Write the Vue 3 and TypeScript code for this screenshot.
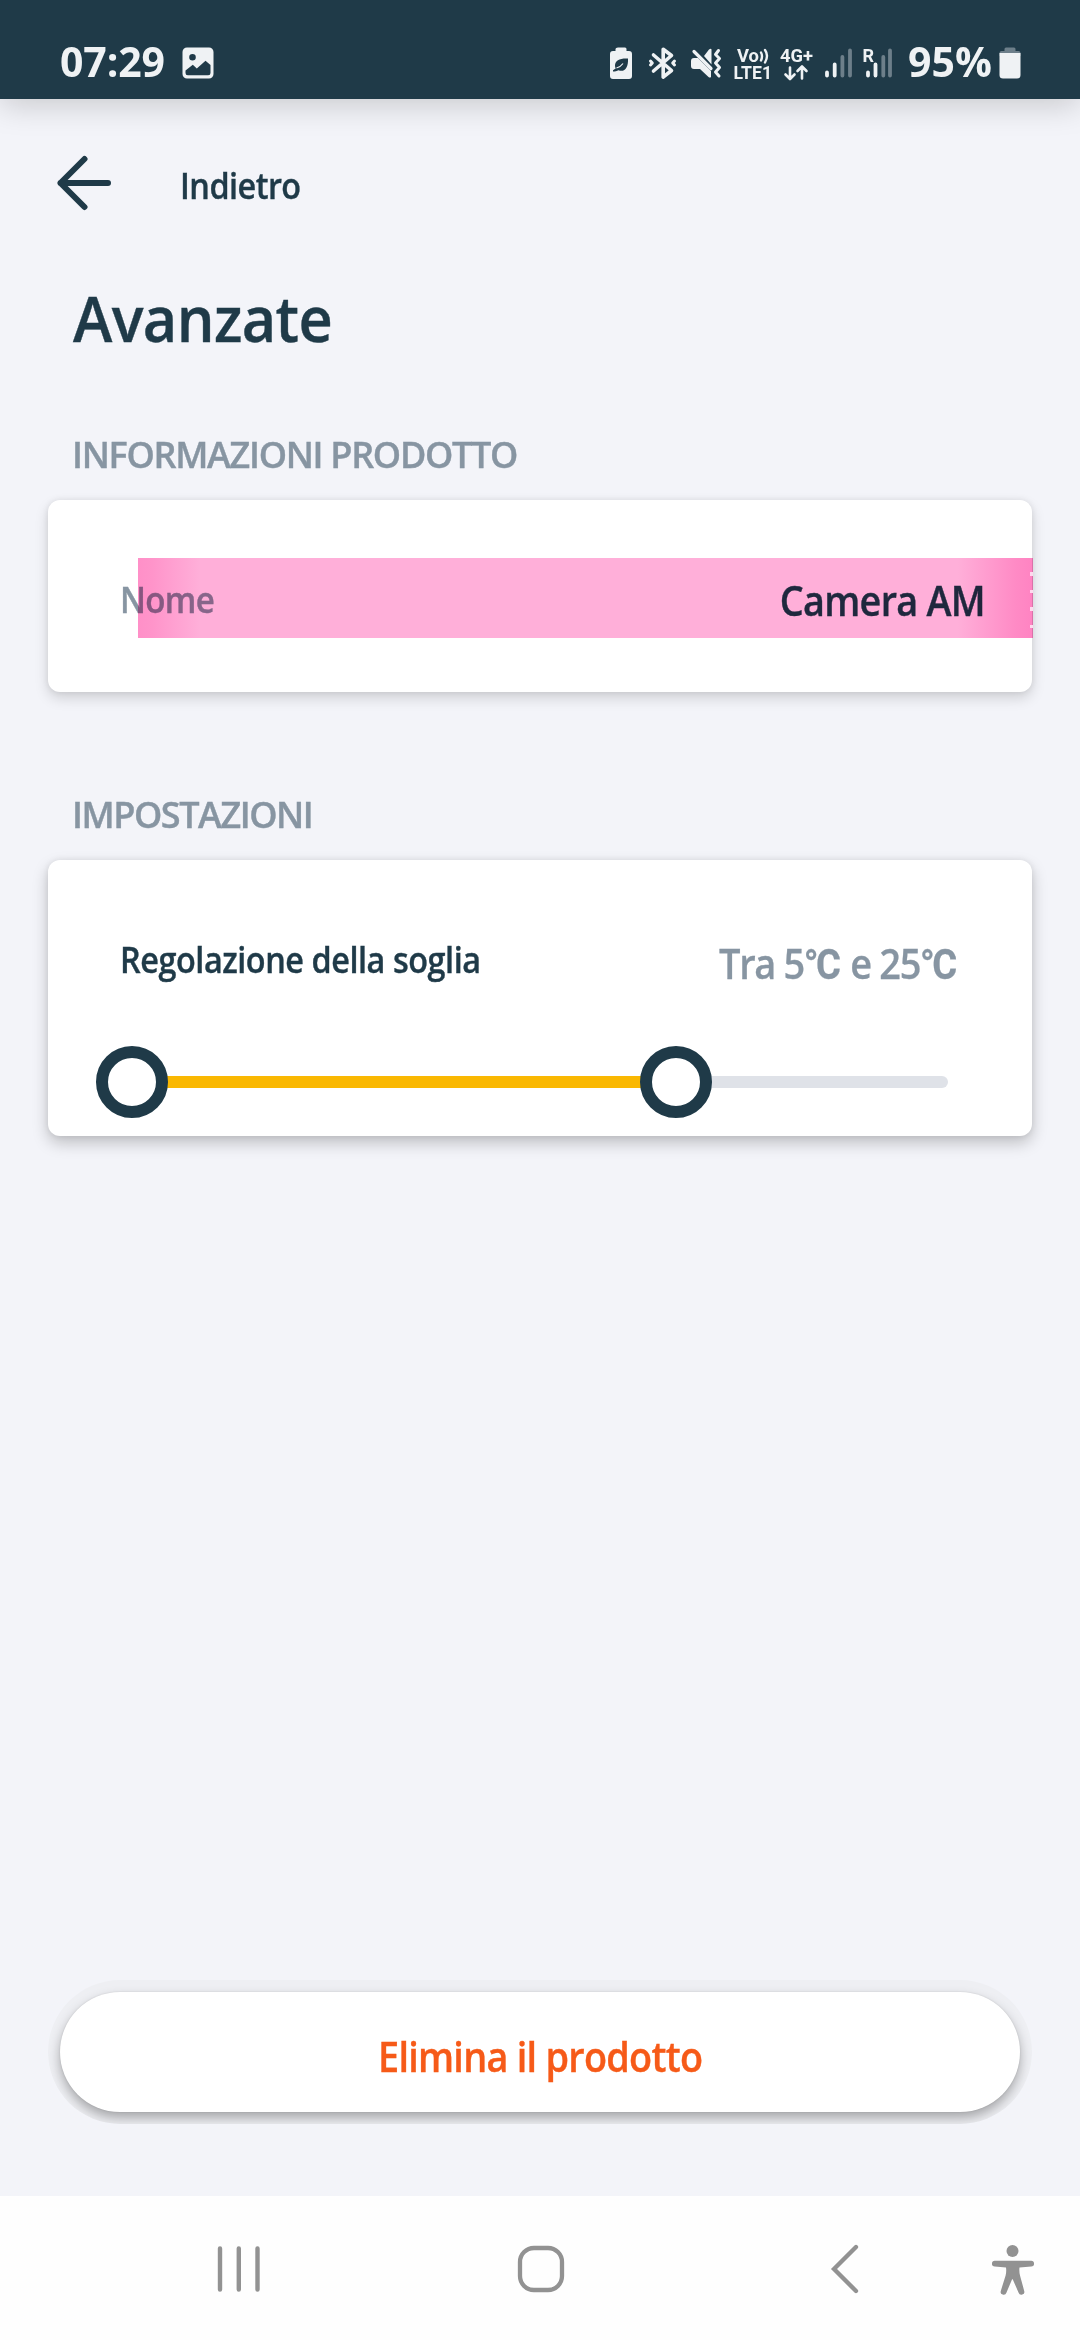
<script setup lang="ts">
import { ref } from 'vue'

const name = ref('Camera AM')
const low = ref(5)
const high = ref(25)
const trackWidth = 816
const lowPos = 0
const highPos = 544
</script>

<template>
  <div class="screen">
    <div class="status">
      <span class="clock">07:29</span>
      <svg class="photo" width="32" height="32" viewBox="0 0 32 32">
        <path fill="#eff2f4" fill-rule="evenodd" d="M5 0.5h22a4.500 4.500 0 0 1 4.500 4.500v22a4.500 4.500 0 0 1-4.500 4.500h-22a4.500 4.500 0 0 1-4.500-4.500v-22a4.500 4.500 0 0 1 4.500-4.500zM10.500 7a3.300 3.300 0 1 0 0 6.600a3.300 3.300 0 0 0 0-6.600zM3.500 23.500v2.500q0 2.300 2.300 2.300h20.400q2.300 0 2.300-2.300v-8l-5-4.300l-8.700 7.800l-4-3.700z" />
      </svg>
      <svg class="system" width="284" height="44" viewBox="608 40.500 284 44">
        <g fill="#eff2f4">
          <path fill-rule="evenodd" d="M618 47h7q1.500 0 1.500 1.500v2h2.500q3 0 3 3v22q0 3-3 3h-16q-3 0-3-3v-22q0-3 3-3h2.500v-2q0-1.500 2.500-1.500zM628 58c-8-.5-13 2-13 7c0 1 .2 2 .7 3l-2.700 1.700v1.300c2 0 4-.5 5.500-1.300c6 2.500 10-2.500 9.500-11.700z" />
          <path d="M616.500 67.500q4-1 6.500-4.500" fill="none" stroke="#eff2f4" stroke-width="1.200" />
        </g>
        <g fill="none" stroke="#eff2f4" stroke-width="3.600" stroke-linecap="round" stroke-linejoin="round">
          <path d="M653.500 54.500l18 15.500l-8.300 6.700v-28l8.300 6.300l-18 15.500" />
          <path d="M650.500 60.500l1.800 2l-1.800 2M674.500 60.500l-1.800 2l1.800 2" stroke-width="3" />
        </g>
        <g fill="#eff2f4">
          <path d="M694 57.500h4l13 13v6q-1 1-2.500 0l-8.500-8h-6q-3 0-3-3v-5q0-3 3-3zM709 49q2-1.500 2.500 0v15l-7.500-8.500z" />
          <path d="M694 51l17 17" stroke="#eff2f4" stroke-width="3.200" stroke-linecap="round" />
          <path d="M718.500 50l-3 4l4 4l-4 4.500l4 4.500l-4 4.500l3.500 4" fill="none" stroke="#eff2f4" stroke-width="3" stroke-linecap="round" stroke-linejoin="round" />
        </g>
        <g class="tiny">
          <text x="737" y="61" textLength="22" lengthAdjust="spacingAndGlyphs">Vo</text>
          <text x="733.500" y="78.400" textLength="38.500" lengthAdjust="spacingAndGlyphs">LTE1</text>
          <text x="780" y="61" textLength="33" lengthAdjust="spacingAndGlyphs">4G+</text>
          <text x="862.500" y="61" class="roam">R</text>
        </g>
        <g fill="none" stroke="#eff2f4" stroke-width="2.400" stroke-linecap="round" stroke-linejoin="round">
          <path d="M761 52q2 3.500 0 8M765 49.500q4 5.500 0 12.500" />
          <path d="M790 67v11M785.500 74l4.500 4.500l4.500-4.500M802 78v-11M797.500 70.500l4.500-4.500l4.500 4.500" stroke-width="2.600" />
        </g>
        <g stroke-width="3.800" stroke-linecap="round">
          <path stroke="#eff2f4" d="M827 72v3M834.700 64v11M868 72v3M875.500 64v11" />
          <path stroke="#6d7f8a" d="M842.400 56.500v18.500M850 50v25M883.300 56.500v18.500M890 50v25" />
        </g>
      </svg>
      <span class="percent">95%</span>
      <svg class="battery" width="22" height="32" viewBox="0 0 22 32">
        <path fill="#6d7f8a" d="M7 0.500h8q1.500 0 1.500 1.500v2h3q2 0 2 2v3h-21v-3q0-2 2-2h3v-2q0-1.500 1.500-1.500z" />
        <path fill="#eff2f4" d="M0.500 6h21v22q0 3.500-3.500 3.500h-14q-3.500 0-3.500-3.500z" />
      </svg>
    </div>

    <header class="bar">
      <svg width="56" height="56" viewBox="0 0 56 56">
        <path d="M28.500 4L4.500 28l24 24M4.500 28H52" fill="none" stroke="#1f3a48" stroke-width="6" stroke-linecap="round" stroke-linejoin="round" />
      </svg>
      <span class="back">Indietro</span>
    </header>

    <h1>Avanzate</h1>

    <h2 class="info">INFORMAZIONI PRODOTTO</h2>
    <section class="card product">
      <span class="key">Nome</span>
      <span class="value">{{ name }}</span>
      <div class="marker"></div>
      <div class="ticks"><i v-for="n in 4" :key="n"></i></div>
    </section>

    <h2 class="settings">IMPOSTAZIONI</h2>
    <section class="card threshold">
      <div class="row">
        <span class="label">Regolazione della soglia</span>
        <span class="range">Tra {{ low }}<b>°C</b> e {{ high }}<b>°C</b></span>
      </div>
      <div class="slider" :style="{ width: trackWidth + 'px' }">
        <div class="fill" :style="{ width: highPos + 'px' }"></div>
        <div class="thumb" :style="{ left: lowPos + 'px' }"></div>
        <div class="thumb" :style="{ left: highPos + 'px' }"></div>
      </div>
    </section>

    <div class="action">
      <button type="button"><span>Elimina il prodotto</span></button>
    </div>

    <nav>
      <svg class="recents" width="44" height="50" viewBox="0 0 44 50">
        <path d="M4 4.500v41M22.800 4.500v41M41.500 4.500v41" stroke="#929292" stroke-width="4.400" stroke-linecap="round" />
      </svg>
      <svg class="home" width="50" height="50" viewBox="0 0 50 50">
        <rect x="4" y="4" width="42" height="42" rx="14" fill="none" stroke="#929292" stroke-width="4.300" />
      </svg>
      <svg class="prev" width="30" height="50" viewBox="0 0 30 50">
        <path d="M26 3L4 25L26 47" fill="none" stroke="#929292" stroke-width="4.300" stroke-linecap="round" />
      </svg>
      <svg class="access" width="44" height="52" viewBox="0 0 44 52">
        <g fill="#929292">
          <circle cx="21.500" cy="7" r="6" />
          <path d="M4 16.800h36a2.900 2.900 0 0 1 .3 5.800l-11.800.8q-.5 4 .5 8l4.200 15.500a2.900 2.900 0 0 1-5.600 1.800l-5.900-13.500h-.6l-5.700 13.500a2.900 2.900 0 0 1-5.600-1.800l4.800-15.500q1-4 .4-8l-11.300-.8a2.900 2.900 0 0 1 .3-5.800z" />
        </g>
      </svg>
    </nav>
  </div>
</template>

<style>
body {
  margin: 0;
  background: #f3f4f9;
}
</style>

<style scoped>
.screen {
  width: 1080px;
  height: 2340px;
  display: flex;
  flex-direction: column;
  overflow: hidden;
  background: #f3f4f9;
  color: #1f3a48;
  font-family: "Open Sans", "Noto Sans", sans-serif;
  font-weight: 600;
}
.status {
  flex: none;
  height: 99px;
  box-sizing: border-box;
  padding: 26px 59px 0 60px;
  display: flex;
  align-items: center;
  background: #1f3a48;
  color: #eff2f4;
  box-shadow: 0 6px 30px rgba(0, 0, 0, 0.18);
  white-space: nowrap;
}
.clock,
.percent {
  margin-bottom: 3px;
  font-size: 41px;
  line-height: 48px;
  font-weight: 700;
}
.clock {
  width: 122px;
  letter-spacing: -0.1px;
}
.system {
  margin-left: 394px;
}
.percent {
  width: 90px;
  margin: 0 0 3px 16px;
}
.battery {
  margin-left: auto;
}
.tiny {
  fill: #eff2f4;
  font: 700 17.500px Roboto, sans-serif;
}
.roam {
  font-size: 18px;
}
.bar {
  flex: none;
  height: 168px;
  padding-left: 56px;
  display: flex;
  align-items: center;
}
.back,
h1,
h2,
.key,
.value,
.label,
button span {
  -webkit-text-stroke: 0.4px currentColor;
}
.back {
  margin: 6px 0 0 68px;
  font-size: 36px;
  line-height: 48px;
  letter-spacing: -0.600px;
  transform: scaleX(0.9);
  transform-origin: left;
}
h1 {
  flex: none;
  margin: 11px 0 0 73px;
  font-size: 64px;
  line-height: 80px;
  font-weight: 600;
  letter-spacing: -0.700px;
  transform: scaleX(0.93);
  transform-origin: left;
}
h2 {
  flex: none;
  margin: 0 0 0 72px;
  font-size: 36px;
  line-height: 48px;
  font-weight: 600;
  letter-spacing: -1.300px;
  color: #8795a2;
}
.info {
  margin-top: 73px;
}
.settings {
  margin-top: 99px;
  letter-spacing: -1.450px;
}
.card {
  flex: none;
  position: relative;
  box-sizing: border-box;
  width: 984px;
  margin: 21px 48px 0;
  border-radius: 12px;
  background: #fff;
  box-shadow: 0 6px 14px rgba(0, 0, 0, 0.15), 0 0 6px rgba(0, 0, 0, 0.08);
}
.product {
  height: 192px;
  padding: 6px 47px 0 72px;
  display: flex;
  align-items: center;
  justify-content: space-between;
}
.key {
  font-size: 36px;
  letter-spacing: -0.700px;
  color: #8795a2;
  transform: scaleX(0.92);
  transform-origin: left;
}
.value {
  font-size: 42px;
  letter-spacing: -0.800px;
  color: #1f3a48;
  transform: scaleX(0.9);
  transform-origin: right;
}
.marker {
  position: absolute;
  left: 90px;
  top: 58px;
  width: 895px;
  height: 80px;
  mix-blend-mode: multiply;
  background: linear-gradient(90deg, #ff90c8 0, #ff94ca 14px, #ffafd9 62px, #ffafd9 820px, #ff8ac5 878px, #ff83c2 100%);
}
.ticks {
  position: absolute;
  right: -1px;
  top: 72px;
  width: 3px;
  display: flex;
  flex-direction: column;
  gap: 14px;
}
.ticks i {
  height: 3.500px;
  background: #ffd9ee;
}
.threshold {
  height: 276px;
  padding: 73px 74px 0 72px;
  box-shadow: 0 7px 16px rgba(0, 0, 0, 0.22), 0 0 6px rgba(0, 0, 0, 0.08);
}
.row {
  height: 60px;
  display: flex;
  justify-content: space-between;
  align-items: flex-start;
  white-space: nowrap;
}
.label {
  font-size: 36px;
  line-height: 53px;
  letter-spacing: -0.500px;
  transform: scaleX(0.9);
  transform-origin: left;
}
.range {
  font-size: 42px;
  line-height: 60px;
  letter-spacing: -1.500px;
  color: #8795a2;
  -webkit-text-stroke: 0.3px currentColor;
  transform: scaleX(0.905);
  transform-origin: right;
}
.range b {
  margin-right: 4px;
  font-family: Roboto, sans-serif;
  font-weight: 700;
  line-height: 1;
  letter-spacing: -3px;
}
.slider {
  position: relative;
  height: 12px;
  margin: 83px 0 0 12px;
  border-radius: 6px;
  background: #dfe2e8;
}
.fill {
  height: 12px;
  background: #fab802;
}
.thumb {
  position: absolute;
  top: -30px;
  width: 72px;
  height: 72px;
  margin-left: -36px;
  box-sizing: border-box;
  border: 12px solid #1f3a48;
  border-radius: 50%;
  background: #fff;
}
.action {
  flex: none;
  margin: auto 48px 72px;
  padding: 12px;
  border-radius: 72px;
  overflow: hidden;
  background: #eeeff3;
}
button {
  display: flex;
  width: 960px;
  height: 120px;
  padding: 6px 0 0;
  align-items: center;
  justify-content: center;
  border: 0;
  border-radius: 60px;
  background: #fff;
  box-shadow: 0 6px 12px rgba(0, 0, 0, 0.3), 0 0 2px rgba(0, 0, 0, 0.12);
  color: #f65a18;
  font: 600 42px "Open Sans", sans-serif;
  letter-spacing: -0.800px;
}
button span {
  transform: scaleX(0.9);
}
nav {
  flex: none;
  height: 144px;
  box-sizing: border-box;
  padding-top: 2px;
  display: flex;
  align-items: center;
  background: #fefefe;
}
.recents {
  margin-left: 216px;
}
.home {
  margin-left: 256px;
}
.prev {
  margin-left: 264px;
}
.access {
  margin: 2px 0 0 131px;
}
</style>
